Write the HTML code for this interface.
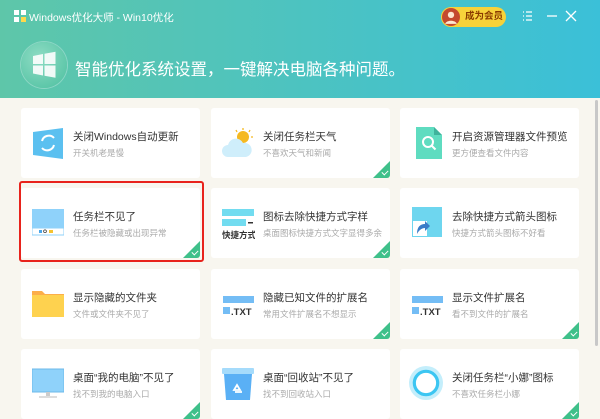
<!DOCTYPE html>
<html><head><meta charset="utf-8"><style>
*{margin:0;padding:0;box-sizing:border-box}
body{width:600px;height:416px;overflow:hidden;background:#f8f6ef;font-family:"Liberation Sans","Noto Sans CJK SC",sans-serif;position:relative}
.hdr{position:absolute;left:0;top:0;width:600px;height:98px;background:linear-gradient(90deg,#5ec6a9,#3bc0d8)}
.title{position:absolute;left:29px;top:10px;color:#fff;font-size:10.5px}
.logo{position:absolute;left:14px;top:10px;width:12px;height:12px}
.logo i{position:absolute;width:5px;height:5px;background:#fff}
.slogan{position:absolute;left:75px;top:56px;color:#fff;font-size:16.5px;letter-spacing:0}
.bigwin{position:absolute;left:21px;top:42px;width:46px;height:46px;border-radius:50%;background:radial-gradient(circle at 40% 35%,#8fdcc4,#4bbf9f);box-shadow:0 0 0 1px rgba(255,255,255,.3)}
.vip{position:absolute;left:441px;top:7px;width:65px;height:20px;border-radius:10px;background:#f7d23a;font-size:9.5px;color:#8a3b00;font-weight:bold;padding-left:24px;line-height:20px}
.vip b{position:absolute;left:1px;top:1px;width:18px;height:18px;border-radius:50%;background:#c4492f}
.card{position:absolute;width:179px;height:70px;background:#fff;border-radius:3px;overflow:hidden}
.card .t{position:absolute;left:52px;top:21px;font-size:10.5px;color:#333;white-space:nowrap}
.card .s{position:absolute;left:52px;top:39px;font-size:8.5px;color:#aaa;white-space:nowrap}
.card .ic{position:absolute;left:11px;top:19px;width:32px;height:32px}
.chk{position:absolute;right:0;bottom:0;width:0;height:0;border-style:solid;border-width:0 0 17px 17px;border-color:transparent transparent #3fc08a transparent}
.chk:after{content:"";position:absolute;left:-8px;top:9px;width:5px;height:3px;border-left:1.3px solid #fff;border-bottom:1.3px solid #fff;transform:rotate(-45deg)}
.sel{position:absolute;left:19px;top:181px;width:185px;height:81px;border:2px solid #e8231c;border-radius:3px}
</style></head><body>
<div class="hdr"></div>
<div class="logo"><i style="left:0;top:0"></i><i style="left:7px;top:0"></i><i style="left:0;top:7px"></i><i style="left:7px;top:7px;background:#ffd94a"></i></div>
<div class="title">Windows优化大师 - Win10优化</div>
<div class="vip"><b><svg width="18" height="18" viewBox="0 0 17 17"><circle cx="8.5" cy="6.5" r="3" fill="#fde6d0"/><path d="M3 15c1-4 10-4 11 0z" fill="#fde6d0"/></svg></b>成为会员</div>
<svg style="position:absolute;left:520px;top:9px" width="60" height="14" viewBox="0 0 60 14"><g stroke="#fff" stroke-width="1.3" fill="none"><path d="M3 3h1M6 3h6M3 7h1M6 7h6M3 11h1M6 11h6"/><path d="M27 7h10"/><path d="M46 2l10 10M56 2l-10 10"/></g></svg>
<div class="bigwin"><svg width="46" height="46" viewBox="0 0 46 46"><g fill="#fff" opacity=".9"><path d="M12 14l10-2v10H12z"/><path d="M23.5 11.8l11-2v12.2h-11z"/><path d="M12 23.5h10v10l-10-2z"/><path d="M23.5 23.5h11v12.2l-11-2z"/></g></svg></div>
<div class="slogan">智能优化系统设置，一键解决电脑各种问题。</div>
<div style="position:absolute;left:595px;top:100px;width:3px;height:246px;background:#c8c8c8;border-radius:2px"></div>

<div class="card" style="left:21px;top:108px"><svg class="ic" viewBox="0 0 32 32"><path d="M1 5l30-4v31L1 28z" fill="#5bc0f0"/><path d="M10 14a7 7 0 0 1 12-3M22 18a7 7 0 0 1-12 3" stroke="#fff" stroke-width="2" fill="none"/></svg><div class="t">关闭Windows自动更新</div><div class="s">开关机老是慢</div></div>
<div class="card" style="left:211px;top:108px"><svg class="ic" viewBox="0 0 32 32"><circle cx="21" cy="10" r="6" fill="#f5b921"/><path d="M21 1v2M28 3l-1 2M31 10h-2M14 3l1 2" stroke="#f5b921" stroke-width="1.3"/><path d="M6 30a6 6 0 0 1 0-12 8 8 0 0 1 15-2 6 6 0 0 1 3 14z" fill="#cfeefb"/></svg><div class="t">关闭任务栏天气</div><div class="s">不喜欢天气和新闻</div><div class="chk"></div></div>
<div class="card" style="left:400px;top:108px"><svg class="ic" viewBox="0 0 32 32"><path d="M5 0h18l8 8v24H5z" fill="#5fdcc0"/><path d="M23 0v8h8z" fill="#3fb39c"/><circle cx="17" cy="15" r="5" stroke="#fff" stroke-width="2" fill="none"/><path d="M20.5 18.5l4 4" stroke="#fff" stroke-width="2"/></svg><div class="t">开启资源管理器文件预览</div><div class="s">更方便查看文件内容</div></div>

<div class="card" style="left:21px;top:188px"><svg class="ic" viewBox="0 0 32 32"><rect x="0" y="2" width="32" height="26" fill="#8fd2fa"/><rect x="0" y="21" width="32" height="7" fill="#fff" stroke="#8fd2fa"/><rect x="7" y="23" width="3" height="3" fill="#4aa6e8"/><circle cx="13" cy="24.3" r="1.4" stroke="#333" fill="none" stroke-width=".7"/><rect x="17" y="23" width="4" height="3" fill="#f5c330"/></svg><div class="t">任务栏不见了</div><div class="s">任务栏被隐藏或出现异常</div><div class="chk"></div></div>
<div class="card" style="left:211px;top:188px"><svg class="ic" viewBox="0 0 32 32" style="width:34px;left:10px"><rect x="0" y="2" width="32" height="7" fill="#72dcf0"/><rect x="0" y="12" width="24" height="7" fill="#72dcf0"/><rect x="26" y="15" width="5" height="1.5" fill="#333"/><text x="0" y="31" font-size="8.5" font-weight="bold" fill="#333" font-family="Noto Sans CJK SC">快捷方式</text></svg><div class="t">图标去除快捷方式字样</div><div class="s">桌面图标快捷方式文字显得多余</div><div class="chk"></div></div>
<div class="card" style="left:400px;top:188px"><svg class="ic" viewBox="0 0 32 32"><rect x="1" y="0" width="30" height="30" fill="#6ed6ef"/><rect x="2" y="14" width="14" height="15" fill="#fff"/><path d="M6 27c0-7 3-10 8-10v-3l5 5-5 5v-3c-3 0-6 2-8 6z" fill="#3a7cc8"/></svg><div class="t">去除快捷方式箭头图标</div><div class="s">快捷方式箭头图标不好看</div></div>

<div class="card" style="left:21px;top:269px"><svg class="ic" viewBox="0 0 32 32"><path d="M0 3h10l3 3h19v5H0z" fill="#fcae4a"/><rect x="0" y="7" width="32" height="22" fill="#fed24f"/></svg><div class="t">显示隐藏的文件夹</div><div class="s">文件或文件夹不见了</div></div>
<div class="card" style="left:211px;top:269px"><svg class="ic" viewBox="0 0 32 32"><rect x="1" y="8" width="31" height="7" fill="#74bdf5"/><rect x="1" y="19" width="7" height="7" fill="#74bdf5"/><text x="9" y="27" font-size="9.5" font-weight="bold" fill="#333" font-family="Liberation Sans">.TXT</text></svg><div class="t">隐藏已知文件的扩展名</div><div class="s">常用文件扩展名不想显示</div><div class="chk"></div></div>
<div class="card" style="left:400px;top:269px"><svg class="ic" viewBox="0 0 32 32"><rect x="1" y="8" width="31" height="7" fill="#74bdf5"/><rect x="1" y="19" width="7" height="7" fill="#74bdf5"/><text x="9" y="27" font-size="9.5" font-weight="bold" fill="#333" font-family="Liberation Sans">.TXT</text></svg><div class="t">显示文件扩展名</div><div class="s">看不到文件的扩展名</div><div class="chk"></div></div>

<div class="card" style="left:21px;top:349px"><svg class="ic" viewBox="0 0 32 32"><rect x="0" y="1" width="32" height="23" fill="#8fd2fa" stroke="#6cb9ea"/><rect x="14" y="24" width="4" height="4" fill="#ccc"/><rect x="7" y="28" width="18" height="2" fill="#ddd"/></svg><div class="t">桌面“我的电脑”不见了</div><div class="s">找不到我的电脑入口</div><div class="chk"></div></div>
<div class="card" style="left:211px;top:349px"><svg class="ic" viewBox="0 0 32 32"><rect x="0" y="0" width="32" height="6" rx="1" fill="#a5dbfb"/><path d="M2 6h28l-2 26H4z" fill="#5ab0f5"/><path d="M12 22l3-5 3 5zM13 24h7" stroke="#fff" stroke-width="1.8" fill="none"/></svg><div class="t">桌面“回收站”不见了</div><div class="s">找不到回收站入口</div></div>
<div class="card" style="left:400px;top:349px"><svg class="ic" viewBox="0 0 32 32" style="top:17px;width:34px;height:34px;left:9px"><circle cx="16" cy="16" r="16" fill="#c4eefb"/><circle cx="16" cy="16" r="11" stroke="#3cc6f2" stroke-width="3" fill="#fff"/></svg><div class="t">关闭任务栏“小娜”图标</div><div class="s">不喜欢任务栏小娜</div><div class="chk"></div></div>

<div class="sel"></div>
</body></html>
